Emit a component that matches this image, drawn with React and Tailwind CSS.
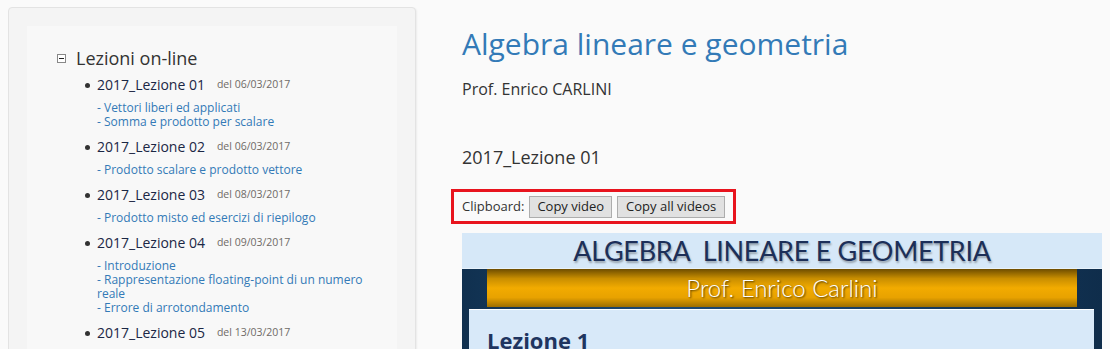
import React from 'react';

const lessons = [
  { title: '2017_Lezione 01', date: 'del 06/03/2017', topics: ['- Vettori liberi ed applicati', '- Somma e prodotto per scalare'] },
  { title: '2017_Lezione 02', date: 'del 06/03/2017', topics: ['- Prodotto scalare e prodotto vettore'] },
  { title: '2017_Lezione 03', date: 'del 08/03/2017', topics: ['- Prodotto misto ed esercizi di riepilogo'] },
  { title: '2017_Lezione 04', date: 'del 09/03/2017', topics: ['- Introduzione', '- Rappresentazione floating-point di un numero reale', '- Errore di arrotondamento'] },
  { title: '2017_Lezione 05', date: 'del 13/03/2017', topics: [] }
];

const Sidebar = () => (
  <div className="w-[408px] h-[400px] shrink-0 rounded border border-[#e3e3e3] bg-[#f4f4f4] shadow-[1px_1px_2px_rgba(0,0,0,0.06)] pt-[18px] pl-[18px] pr-[18px]">
    <div className="h-full bg-[#f8f8f8] pt-[20px] pl-[30px]">
      <div className="flex items-center h-[24px]">
        <span className="w-[9px] h-[9px] border border-[#888] bg-white flex items-center justify-center">
          <span className="block w-[5px] h-px bg-[#222]" />
        </span>
        <span className="ml-[10px] text-[18px] leading-[24px] text-[#333]">Lezioni on-line</span>
      </div>
      <ul className="mt-[5px] pl-[40px]">
        {lessons.map(l => (
          <li key={l.title} className="mb-[8px]">
            <div className="flex items-center h-[20px] relative">
              <span className="absolute left-[-12px] top-[8px] w-[5px] h-[5px] rounded-full bg-[#333]" />
              <span className="text-[14px] leading-[20px] text-[#1b2745]">{l.title}</span>
              <span className="ml-[12px] text-[10.5px] text-[#6f6a66]">{l.date}</span>
            </div>
            {l.topics.length > 0 && (
              <div className="mt-[6px] w-[275px]">
                {l.topics.map(t => (
                  <div key={t} className="text-[12px] leading-[14px] text-[#337ab7]">{t}</div>
                ))}
              </div>
            )}
          </li>
        ))}
      </ul>
    </div>
  </div>
);

const VideoFrame = () => (
  <div className="mt-[9px] w-[640px] h-[140px] bg-[#d6e8f8] flex flex-col">
    <div className="h-[36px] flex items-center justify-center border-b border-[#e8f2fb]">
      <span className="font-['Lato',sans-serif] text-[27px] leading-none text-[#1c2f58] [text-shadow:1px_2px_2px_rgba(0,0,0,0.3)] tracking-[-0.3px]">
        ALGEBRA&nbsp; LINEARE E GEOMETRIA
      </span>
    </div>
    <div className="flex-1 bg-[linear-gradient(90deg,#10304f,#1d4a74_30%,#163d63_70%,#0f2d4b)] flex flex-col">
      <div className="mx-[25px] h-[38px] bg-[linear-gradient(180deg,#6e4d00_0%,#c98e00_25%,#f2ab00_50%,#e8a200_75%,#9c6e00_100%)] flex items-center justify-center">
        <span className="font-['Lato',sans-serif] font-light text-[24px] text-white [text-shadow:1px_1px_2px_rgba(0,0,0,0.7)]">Prof. Enrico Carlini</span>
      </div>
      <div className="mt-[2px] ml-[7px] mr-[8px] flex-1 bg-[#d8e9f9] border-t border-white pl-[18px] pt-[14px]">
        <span className="font-['Open_Sans',sans-serif] font-bold text-[22px] text-[#1f3560]">Lezione 1</span>
      </div>
    </div>
  </div>
);

export default function App() {
  return (
    <div className="w-[1110px] h-[349px] overflow-hidden bg-[#fafafa] flex font-['Open_Sans',sans-serif] pt-[7px] pl-[8px]">
      <Sidebar />
      <div className="ml-[46px] w-[640px]">
        <h1 className="mt-[20px] text-[30px] leading-[33px] text-[#337ab7]">Algebra lineare e geometria</h1>
        <p className="mt-[18px] text-[16px] leading-[22px] text-[#333]">Prof. Enrico CARLINI</p>
        <h3 className="mt-[47px] text-[18px] leading-[20px] text-[#333]">2017_Lezione 01</h3>
        <div className="mt-[22px] -ml-[11px] w-[285px] h-[35px] border-[3px] border-[#e8141e] flex items-center pl-[8px] gap-[5px] text-[13px] text-[#333]">
          <span>Clipboard:</span>
          <button className="h-[22px] px-[7px] bg-[#e1e1e1] border border-[#adadad] text-[13px] text-[#222]">Copy video</button>
          <button className="h-[22px] px-[8px] bg-[#e1e1e1] border border-[#adadad] text-[13px] text-[#222]">Copy all videos</button>
        </div>
        <VideoFrame />
      </div>
    </div>
  );
}
